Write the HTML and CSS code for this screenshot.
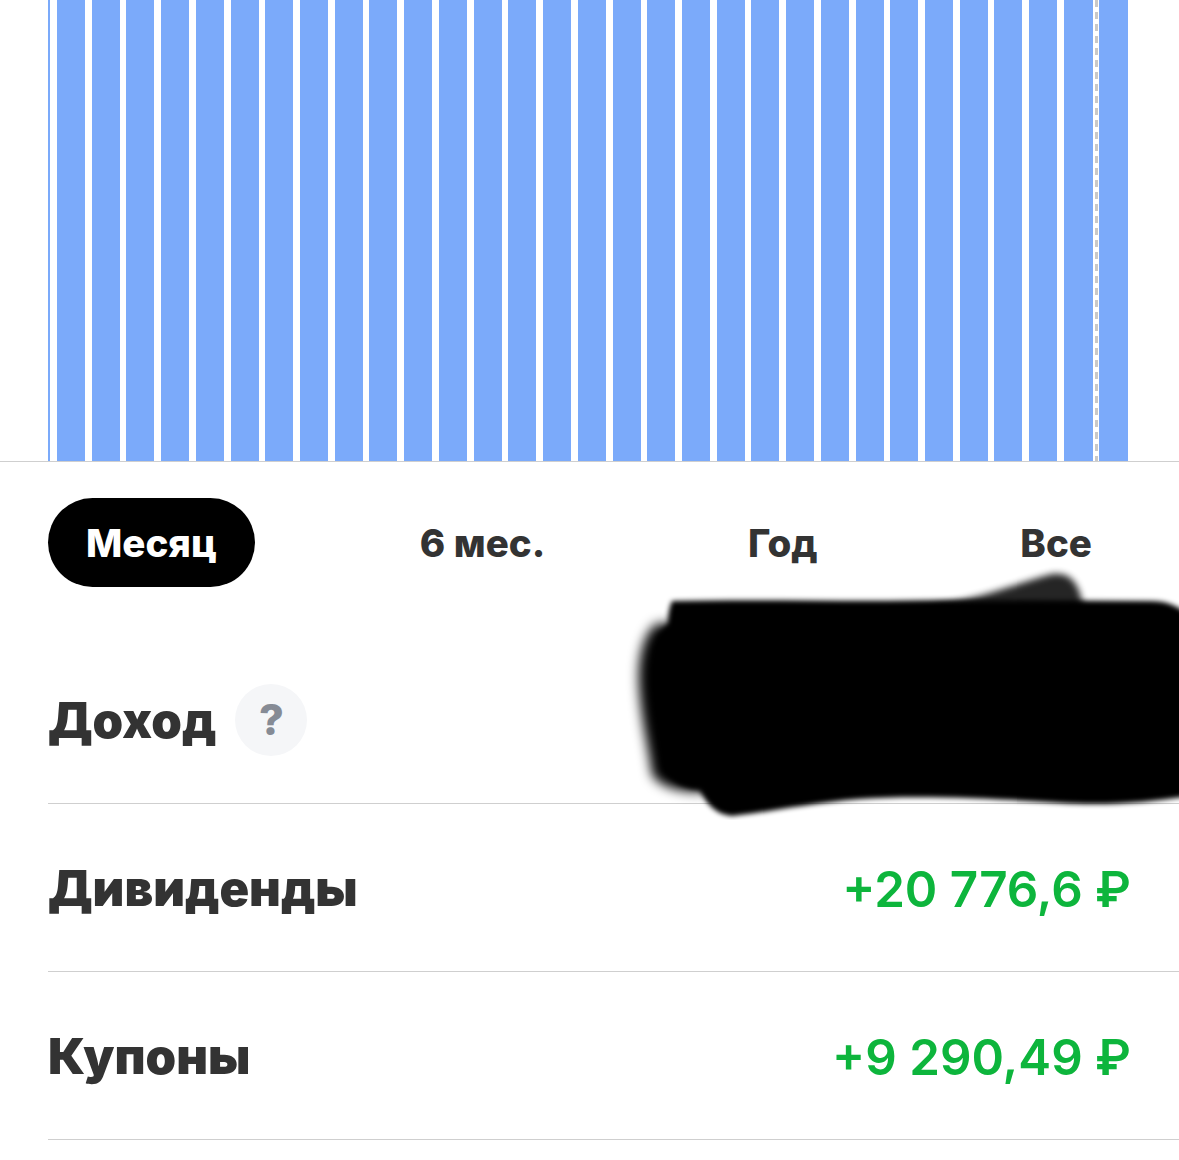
FILE: index.html
```html
<!DOCTYPE html>
<html lang="ru">
  <head>
    <meta charset="UTF-8" />
    <meta name="viewport" content="width=device-width, initial-scale=1.0" />
    <title>Доход</title>
    <link rel="stylesheet" href="styles.css">
  </head>
  <body>
    <div class="page">
      <div class="chart">
        <div class="sliver"></div>
        <div class="bars">
          <div class="bar"></div><div class="bar"></div><div class="bar"></div><div class="bar"></div><div class="bar"></div>
          <div class="bar"></div><div class="bar"></div><div class="bar"></div><div class="bar"></div><div class="bar"></div>
          <div class="bar"></div><div class="bar"></div><div class="bar"></div><div class="bar"></div><div class="bar"></div>
          <div class="bar"></div><div class="bar"></div><div class="bar"></div><div class="bar"></div><div class="bar"></div>
          <div class="bar"></div><div class="bar"></div><div class="bar"></div><div class="bar"></div><div class="bar"></div>
          <div class="bar"></div><div class="bar"></div><div class="bar"></div><div class="bar"></div>
          <div class="bar bar-last"><div class="marker"></div></div>
        </div>
      </div>

      <div class="tabs">
        <div class="tab tab-active">Месяц</div>
        <div class="tab">6 мес.</div>
        <div class="tab">Год</div>
        <div class="tab">Все</div>
      </div>

      <div class="rows">
        <div class="row">
          <div class="row-title">
            <span>Доход</span>
            <span class="help">?</span>
          </div>
        </div>
        <div class="row">
          <div class="row-title">Дивиденды</div>
          <div class="amount">+20 776,6 ₽</div>
        </div>
        <div class="row">
          <div class="row-title">Купоны</div>
          <div class="amount">+9 290,49 ₽</div>
        </div>
      </div>

      <svg class="scribble" width="1179" height="260" viewBox="0 560 1179 260">
        <defs>
          <filter id="soft" x="-5%" y="-15%" width="110%" height="130%">
            <feGaussianBlur stdDeviation="2.5" />
          </filter>
          <filter id="softer" x="-20%" y="-20%" width="140%" height="140%">
            <feGaussianBlur stdDeviation="6" />
          </filter>
          <filter id="hump" x="-20%" y="-40%" width="140%" height="180%">
            <feGaussianBlur stdDeviation="3.5" />
          </filter>
        </defs>
        <path filter="url(#softer)" fill="#000" d="M700 622 L656 624 C642 636 638 660 639 685 C641 720 648 745 652 775 C662 788 680 792 705 792 Z" />
        <path filter="url(#hump)" fill="#000" opacity="0.85" d="M930 606 C985 598 1020 582 1052 574 C1072 572 1080 584 1084 612 Z" />
        <path filter="url(#soft)" fill="#000" d="M672 601 C760 599 860 602 940 600 L1150 601 C1168 601 1178 606 1190 616 L1190 796 C1150 802 1110 806 1060 803 C1000 799 920 795 860 799 C810 803 770 812 732 816 C714 814 707 803 699 790 C685 788 672 783 665 770 C660 740 656 710 654 680 C654 650 658 632 668 624 C668 615 669 608 672 601 Z" />
      </svg>
    </div>
  </body>
</html>
```

FILE: styles.css
```css
body {
  margin: 0;
  background-color: #fff;
  font-family: Inter, "Liberation Sans", Arial, sans-serif;
}

.page {
  position: relative;
  width: 1179px;
  height: 1160px;
  overflow: hidden;
}

.chart {
  display: flex;
  height: 461px;
  padding-left: 48px;
  border-bottom: 1px solid #cfcfcf;
}

.sliver {
  width: 2px;
  margin-right: 7px;
  background-color: #7baafa;
}

.bars {
  display: flex;
  gap: 6.72px;
}

.bar {
  position: relative;
  width: 28px;
  background-color: #7baafa;
}

.bar-last {
  width: 64px;
}

.marker {
  position: absolute;
  top: 0;
  bottom: 0;
  left: 29px;
  width: 6px;
  background-color: #fff;
}

.marker::after {
  content: "";
  position: absolute;
  top: 0;
  bottom: 0;
  left: 2px;
  width: 3px;
  background-image: repeating-linear-gradient(#c9c9c9 0 7px, transparent 7px 12px);
}

.tabs {
  display: flex;
  justify-content: space-between;
  margin: 36px 49px 0 48px;
}

.tab {
  padding: 0 38px;
  height: 89px;
  line-height: 91px;
  border-radius: 45px;
  font-size: 38.5px;
  font-weight: 800;
  color: #333;
}

.tab-active {
  background-color: #000;
  color: #fff;
}

.rows {
  margin: 49px 0 0 48px;
}

.row {
  display: flex;
  justify-content: space-between;
  align-items: center;
  height: 167px;
  padding-right: 48px;
  border-bottom: 1px solid #cfcfcf;
}

.row-title {
  display: flex;
  align-items: center;
  gap: 19px;
  padding-top: 2px;
  font-size: 49px;
  font-weight: 900;
  color: #333;
}

.help {
  width: 72px;
  height: 72px;
  margin-top: -2px;
  border-radius: 50%;
  background-color: #f5f6f8;
  color: #868b95;
  font-size: 43px;
  font-weight: 800;
  line-height: 70px;
  text-align: center;
}

.amount {
  padding-top: 3px;
  font-size: 49.3px;
  font-weight: 600;
  color: #0db53c;
}

.scribble {
  position: absolute;
  top: 560px;
  left: 0;
}
```
